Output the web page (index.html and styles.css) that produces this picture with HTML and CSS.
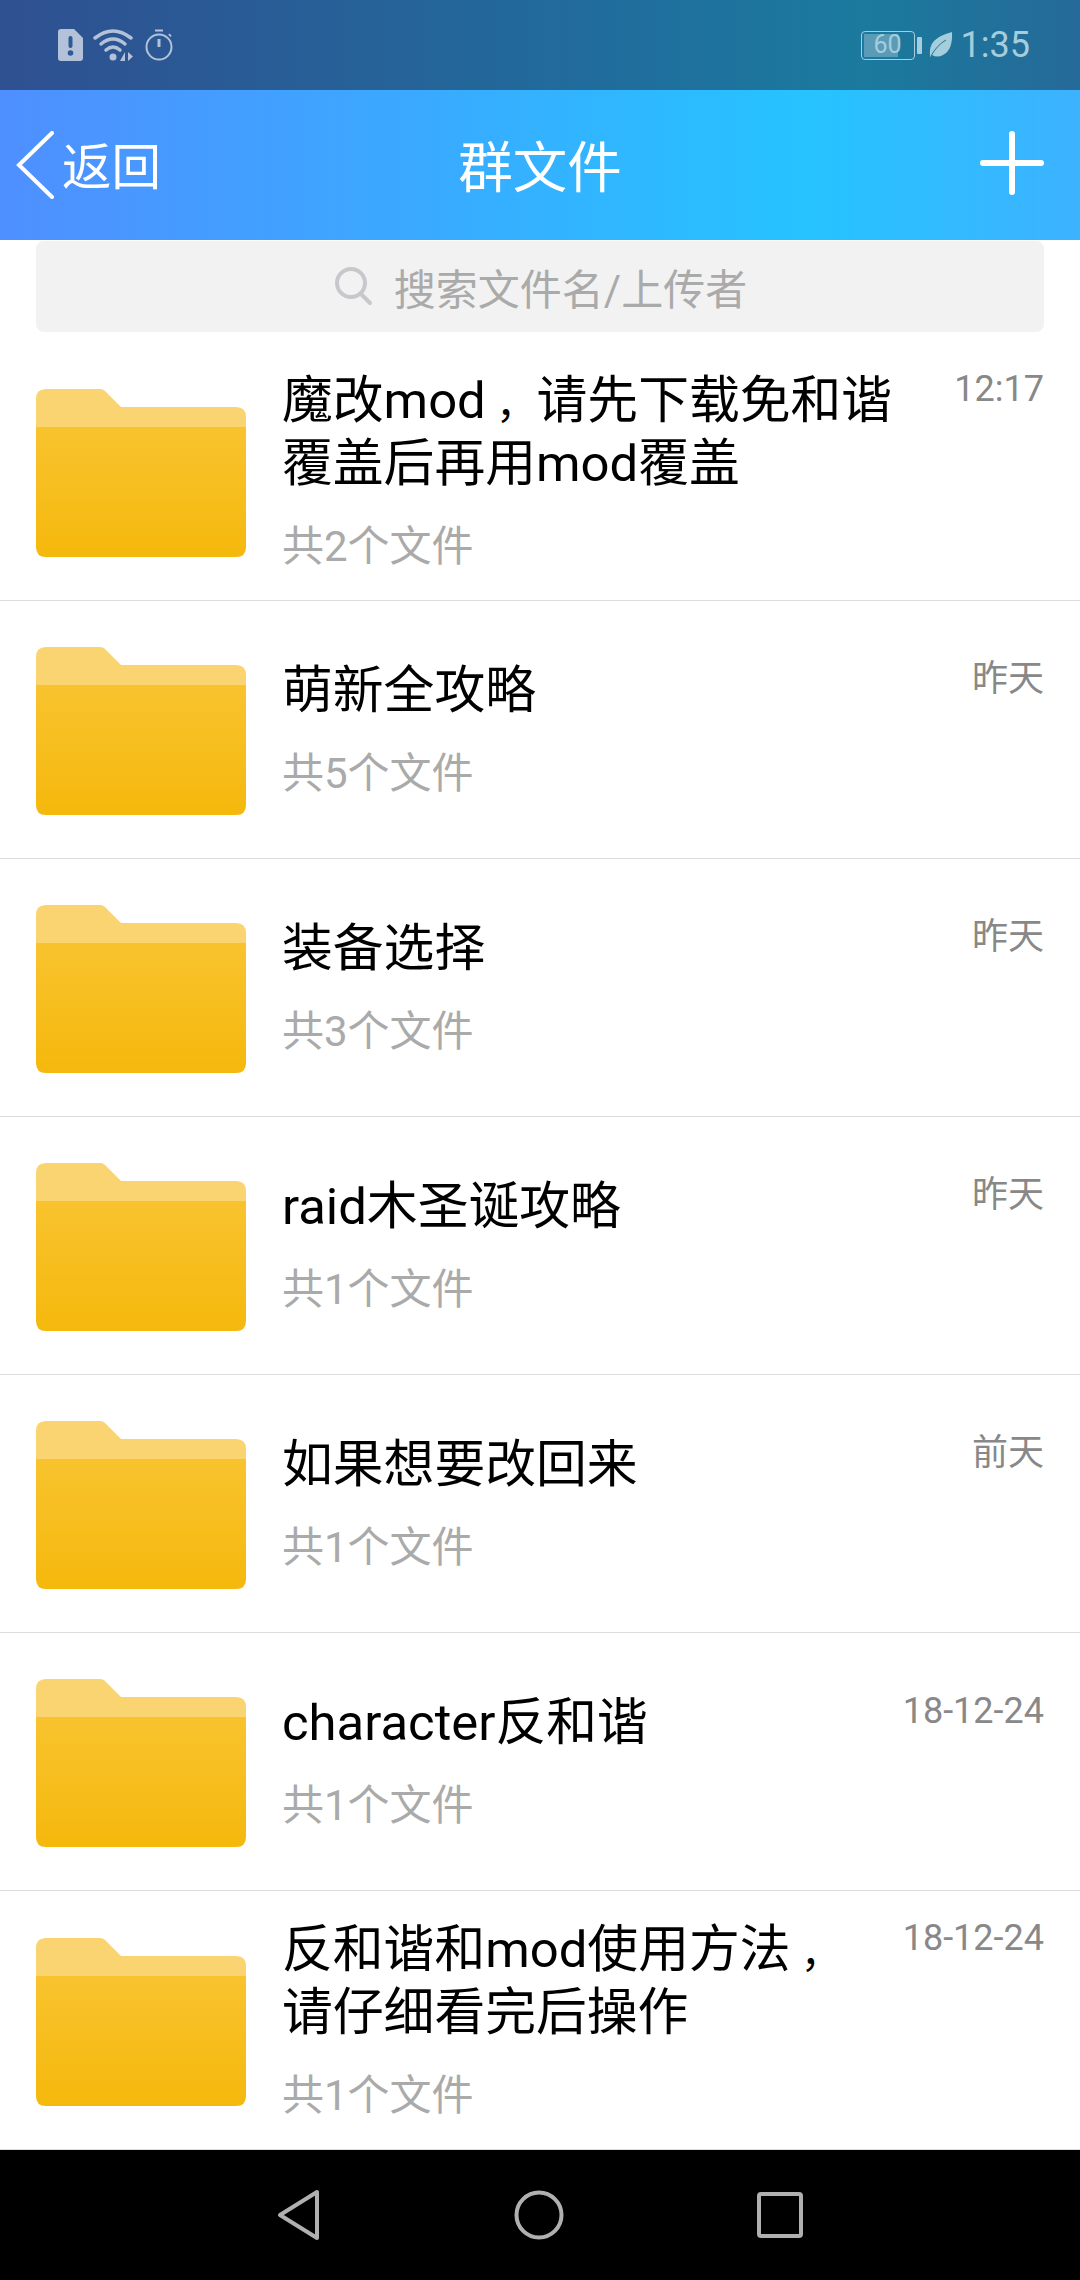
FILE: index.html
```html
<!DOCTYPE html>
<html lang="zh-CN">
<head>
  <meta charset="UTF-8" />
  <title>群文件</title>
  <link rel="stylesheet" href="styles.css">
</head>
<body>
  <svg class="defs" width="0" height="0">
    <symbol id="folder" viewBox="0 0 210 168">
      <path d="M0 38V10Q0 0 10 0H64Q67 0 69 2L85 18H200Q210 18 210 28V38Z" fill="#fad470"/>
      <path d="M0 38H210V158Q210 168 200 168H10Q0 168 0 158Z" fill="url(#folderFill)"/>
      <defs>
        <linearGradient id="folderFill" x1="0" y1="0" x2="0" y2="1">
          <stop offset="0" stop-color="#f8c32e"/>
          <stop offset="1" stop-color="#f5b80c"/>
        </linearGradient>
      </defs>
    </symbol>
  </svg>

  <div class="status">
    <div class="status-left">
      <svg width="27" height="34" viewBox="0 0 27 34">
        <path d="M4 1H17L26 10V30Q26 33 23 33H4Q1 33 1 30V4Q1 1 4 1Z" fill="#b4c2d9"/>
        <rect x="11.500" y="8" width="4" height="12" rx="2" fill="#2f5a93"/>
        <circle cx="13.500" cy="25" r="2.800" fill="#2f5a93"/>
      </svg>
      <svg width="40" height="34" viewBox="0 0 40 34" fill="none" stroke="#b4c2d9" stroke-linecap="round">
        <path d="M2 10Q20 -4 38 10" stroke-width="3.500"/>
        <path d="M8 16Q20 6 32 16" stroke-width="3.500"/>
        <path d="M13 22Q20 16 27 22" stroke-width="3.500"/>
        <circle cx="20" cy="29" r="3.500" fill="#b4c2d9" stroke="none"/>
        <path d="M32 24V33H27ZM35 24V33L40 28.500Z" fill="#b4c2d9" stroke="none"/>
      </svg>
      <svg width="28" height="32" viewBox="0 0 28 32" fill="none" stroke="#b4c2d9" stroke-width="2">
        <circle cx="14" cy="18" r="12.500"/>
        <path d="M10 1.500H18M24 5L26 7.500"/>
        <path d="M14 10V18" stroke-width="3"/>
      </svg>
    </div>
    <div class="status-right">
      <div class="battery"><span class="battery-level"></span><span class="battery-num">60</span></div>
      <span class="battery-tip"></span>
      <svg width="24" height="26" viewBox="0 0 24 26">
        <path d="M23 0Q24 18 14 23Q8 26 3 23L1 25Q0 14 5 9Q11 3 23 0Z" fill="#a5cddb"/>
        <path d="M2 24Q8 13 17 8" fill="none" stroke="#1d7699" stroke-width="1"/>
      </svg>
      <span class="clock">1:35</span>
    </div>
  </div>

  <header class="topbar">
    <div class="back">
      <svg width="38" height="68" viewBox="0 0 38 68" fill="none" stroke="#fff" stroke-width="4" stroke-linecap="round">
        <path d="M36 2L3 34L36 66"/>
      </svg>
      <span>返回</span>
    </div>
    <div class="title">群文件</div>
    <svg class="plus" width="64" height="64" viewBox="0 0 64 64" stroke="#fff" stroke-width="6" stroke-linecap="round">
      <path d="M3 32H61M32 3V61"/>
    </svg>
  </header>

  <div class="search">
    <svg width="42" height="42" viewBox="0 0 42 42" fill="none" stroke="#c8c8cc" stroke-width="4" stroke-linecap="round">
      <circle cx="18" cy="17" r="14"/>
      <path d="M28 28L37 37"/>
    </svg>
    <span>搜索文件名/上传者</span>
  </div>

  <main class="list">
    <div class="row">
      <svg class="folder"><use href="#folder"/></svg>
      <div class="info">
        <div class="info-top">
          <div class="name">魔改mod<span class="comma">，</span>请先下载免和谐<br>覆盖后再用mod覆盖</div>
          <div class="time">12:17</div>
        </div>
        <div class="count">共2个文件</div>
      </div>
    </div>
    <div class="row">
      <svg class="folder"><use href="#folder"/></svg>
      <div class="info">
        <div class="info-top">
          <div class="name">萌新全攻略</div>
          <div class="time">昨天</div>
        </div>
        <div class="count">共5个文件</div>
      </div>
    </div>
    <div class="row">
      <svg class="folder"><use href="#folder"/></svg>
      <div class="info">
        <div class="info-top">
          <div class="name">装备选择</div>
          <div class="time">昨天</div>
        </div>
        <div class="count">共3个文件</div>
      </div>
    </div>
    <div class="row">
      <svg class="folder"><use href="#folder"/></svg>
      <div class="info">
        <div class="info-top">
          <div class="name">raid木圣诞攻略</div>
          <div class="time">昨天</div>
        </div>
        <div class="count">共1个文件</div>
      </div>
    </div>
    <div class="row">
      <svg class="folder"><use href="#folder"/></svg>
      <div class="info">
        <div class="info-top">
          <div class="name">如果想要改回来</div>
          <div class="time">前天</div>
        </div>
        <div class="count">共1个文件</div>
      </div>
    </div>
    <div class="row">
      <svg class="folder"><use href="#folder"/></svg>
      <div class="info">
        <div class="info-top">
          <div class="name">character反和谐</div>
          <div class="time">18-12-24</div>
        </div>
        <div class="count">共1个文件</div>
      </div>
    </div>
    <div class="row">
      <svg class="folder"><use href="#folder"/></svg>
      <div class="info">
        <div class="info-top">
          <div class="name">反和谐和mod使用方法<span class="comma">，</span><br>请仔细看完后操作</div>
          <div class="time">18-12-24</div>
        </div>
        <div class="count">共1个文件</div>
      </div>
    </div>
  </main>

  <nav class="navbar">
    <svg width="44" height="52" viewBox="0 0 44 52" fill="none" stroke="#b0b0b0" stroke-width="4" stroke-linejoin="round">
      <path d="M40 3V49L3 26Z"/>
    </svg>
    <svg width="50" height="50" viewBox="0 0 50 50" fill="none" stroke="#b0b0b0" stroke-width="4">
      <circle cx="25" cy="25" r="22.500"/>
    </svg>
    <svg width="46" height="46" viewBox="0 0 46 46" fill="none" stroke="#b0b0b0" stroke-width="4" stroke-linejoin="round">
      <rect x="2" y="2" width="42" height="42" rx="2"/>
    </svg>
  </nav>
</body>
</html>
```

FILE: styles.css
```css
body {
  margin: 0;
  width: 1080px;
  height: 2280px;
  overflow: hidden;
  background: #fff;
  font-family: Roboto, "Noto Sans CJK SC", sans-serif;
  display: flex;
  flex-direction: column;
}

.defs {
  position: absolute;
}

.status {
  height: 90px;
  flex: none;
  box-sizing: border-box;
  padding: 0 50px 0 57px;
  display: flex;
  justify-content: space-between;
  align-items: center;
  background: linear-gradient(90deg, #2f5091, #1f6f9d 60%, #1b7a9e 80%, #256a98);
}

.status-left {
  display: flex;
  align-items: center;
  gap: 9px;
}

.status-left svg:last-child {
  margin-left: 3px;
}

.status-right {
  display: flex;
  align-items: center;
}

.battery {
  width: 54px;
  height: 29px;
  box-sizing: border-box;
  border: 1.5px solid #a5cddb;
  border-radius: 4px;
  position: relative;
  overflow: hidden;
}

.battery-level {
  position: absolute;
  left: 2px;
  top: 2px;
  bottom: 2px;
  width: 34px;
  background: #5a9cb8;
}

.battery-num {
  position: absolute;
  left: 0;
  right: 0;
  top: 0;
  text-align: center;
  font-size: 25px;
  line-height: 26px;
  color: #a5cddb;
}

.battery-tip {
  width: 5px;
  height: 17px;
  margin: 0 7px 0 2px;
  border-radius: 1px;
  background: #a5cddb;
}

.clock {
  margin-left: 8px;
  font-size: 36px;
  color: #a5cddb;
}

.topbar {
  height: 150px;
  flex: none;
  box-sizing: border-box;
  padding: 0 36px 4px 16px;
  display: flex;
  align-items: center;
  justify-content: space-between;
  position: relative;
  color: #fff;
  background: linear-gradient(90deg, #4f8fff, #26c3ff 75%, #3db2ff);
}

.back {
  display: flex;
  align-items: center;
  gap: 8px;
  font-size: 49.500px;
}

.back svg {
  margin-top: 4px;
}

.title {
  position: absolute;
  left: 0;
  right: 0;
  text-align: center;
  font-size: 54.500px;
}

.search {
  height: 91px;
  flex: none;
  margin: 1px 36px 11px;
  border-radius: 8px;
  background: #f2f2f2;
  display: flex;
  align-items: center;
  justify-content: center;
  gap: 19px;
  color: #aaa;
  font-size: 42px;
}

.list {
  flex: 1;
}

.row {
  height: 258px;
  box-sizing: border-box;
  padding: 0 36px;
  display: flex;
  align-items: center;
  gap: 36px;
  border-bottom: 1.500px solid #dcdcdc;
}

.row:last-child {
  border-bottom: none;
}

.folder {
  width: 210px;
  height: 168px;
  flex: none;
  margin-top: 3px;
}

.info {
  flex: 1;
}

.info-top {
  display: flex;
  justify-content: space-between;
  align-items: flex-start;
}

.name {
  font-size: 50.800px;
  line-height: 59px;
  white-space: nowrap;
  color: #000;
}

/* comma sits in the middle of its cell in the reference */
.comma {
  font-size: .8em;
  padding-left: .25em;
}

.time {
  margin-top: 2px;
  font-size: 36px;
  line-height: 32px;
  color: #888;
}

.count {
  margin-top: 29px;
  font-size: 42px;
  line-height: 50px;
  color: #aaa;
}

.navbar {
  height: 131px;
  flex: none;
  box-sizing: border-box;
  padding: 0 277px;
  display: flex;
  align-items: center;
  justify-content: space-between;
  background: #000;
  border-top: 1px solid #ddd;
}
```
